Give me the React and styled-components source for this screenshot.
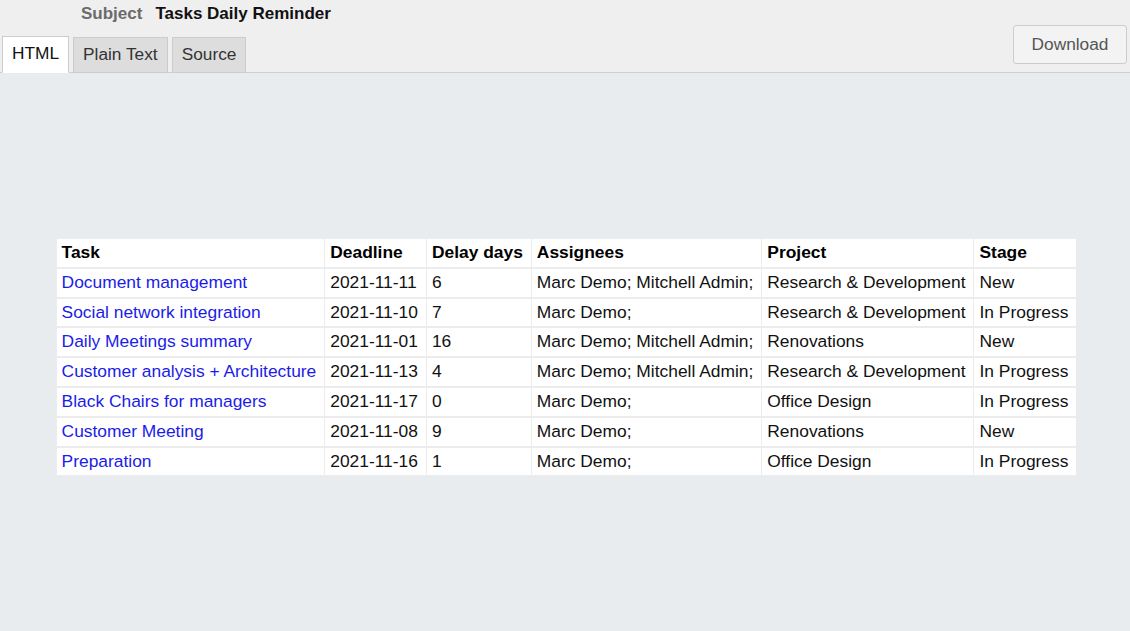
import React from 'react';
import styled, { createGlobalStyle } from 'styled-components';

const GlobalStyle = createGlobalStyle`
  html, body {
    margin: 0;
    padding: 0;
    height: 100%;
  }

  body {
    font-family: 'Liberation Sans', Arial, sans-serif;
    font-size: 17.4px;
    background: #e9ecef;
  }
`;

const tasks = [
  ['Document management', '2021-11-11', '6', 'Marc Demo; Mitchell Admin;', 'Research & Development', 'New'],
  ['Social network integration', '2021-11-10', '7', 'Marc Demo;', 'Research & Development', 'In Progress'],
  ['Daily Meetings summary', '2021-11-01', '16', 'Marc Demo; Mitchell Admin;', 'Renovations', 'New'],
  ['Customer analysis + Architecture', '2021-11-13', '4', 'Marc Demo; Mitchell Admin;', 'Research & Development', 'In Progress'],
  ['Black Chairs for managers', '2021-11-17', '0', 'Marc Demo;', 'Office Design', 'In Progress'],
  ['Customer Meeting', '2021-11-08', '9', 'Marc Demo;', 'Renovations', 'New'],
  ['Preparation', '2021-11-16', '1', 'Marc Demo;', 'Office Design', 'In Progress'],
];

const columns = ['Task', 'Deadline', 'Delay days', 'Assignees', 'Project', 'Stage'];

const Page = styled.div`
  min-height: 631px;
  background: #e9ecef;
`;

const Header = styled.header`
  display: flex;
  justify-content: space-between;
  background: #efefef;
  border-bottom: 1px solid #cfcfcf;
  height: 72px;
`;

const HeaderLeft = styled.div`
  display: flex;
  flex-direction: column;
  justify-content: space-between;
`;

const SubjectLine = styled.div`
  display: flex;
  gap: 13px;
  padding: 4px 0 0 81px;
  font-size: 17px;
  font-weight: bold;
  line-height: 20px;
`;

const SubjectLabel = styled.span`
  color: #6b6b6b;
`;

const SubjectValue = styled.span`
  color: #111;
`;

const Tabs = styled.nav`
  display: flex;
  gap: 4px;
  padding-left: 2px;
  margin-bottom: -1px;
`;

const Tab = styled.div`
  box-sizing: border-box;
  padding: 0 9px 2px;
  display: flex;
  align-items: center;
  font-size: 17.3px;
  color: ${({ $active }) => ($active ? '#111' : '#333')};
  background: ${({ $active }) => ($active ? '#fff' : '#dddddd')};
  border: 1px solid #cccccc;
  border-bottom-color: ${({ $active }) => ($active ? '#fff' : '#cccccc')};
  height: ${({ $active }) => ($active ? '37px' : '36px')};
  margin-top: ${({ $active }) => ($active ? '0' : '1px')};
`;

const DownloadButton = styled.button`
  align-self: flex-start;
  margin: 25px 3px 0 0;
  width: 114px;
  height: 39px;
  font-family: inherit;
  font-size: 17.3px;
  color: #555;
  background: #f3f3f3;
  border: 1px solid #cccccc;
  border-radius: 3px;
`;

const Content = styled.main`
  padding: 165px 0 0 3px;
`;

const Table = styled.table`
  margin: 0 auto;
  border-collapse: collapse;
  background: #fff;
`;

const Th = styled.th`
  text-align: left;
  font-weight: bold;
  color: #000;
  padding: 4px 8px 4px 5px;
  border: 1px solid #ececec;
  white-space: nowrap;
  line-height: 19.8px;
`;

const Td = styled.td`
  padding: 4px 8px 4px 5px;
  border: 1px solid #ececec;
  border-top-width: 2px;
  color: #111;
  white-space: nowrap;
  line-height: 19.8px;
`;

const TaskLink = styled.a`
  color: #1c1ce8;
  text-decoration: none;
`;

const App = () => (
  <Page>
    <GlobalStyle />
    <Header>
      <HeaderLeft>
        <SubjectLine>
          <SubjectLabel>Subject</SubjectLabel>
          <SubjectValue>Tasks Daily Reminder</SubjectValue>
        </SubjectLine>
        <Tabs>
          <Tab $active>HTML</Tab>
          <Tab>Plain Text</Tab>
          <Tab>Source</Tab>
        </Tabs>
      </HeaderLeft>
      <DownloadButton>Download</DownloadButton>
    </Header>
    <Content>
      <Table>
        <thead>
          <tr>
            {columns.map((c) => (
              <Th key={c}>{c}</Th>
            ))}
          </tr>
        </thead>
        <tbody>
          {tasks.map(([name, ...rest]) => (
            <tr key={name}>
              <Td>
                <TaskLink href="#">{name}</TaskLink>
              </Td>
              {rest.map((v, i) => (
                <Td key={i}>{v}</Td>
              ))}
            </tr>
          ))}
        </tbody>
      </Table>
    </Content>
  </Page>
);

export default App;
